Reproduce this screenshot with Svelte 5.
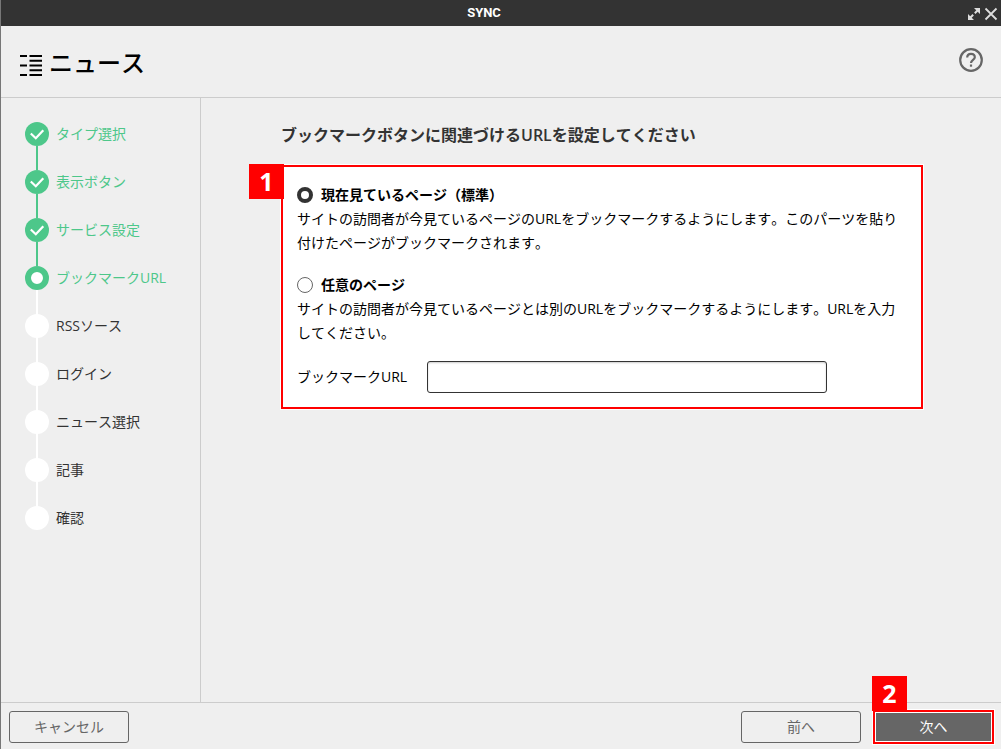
<script>
  const steps = [
    { label: 'タイプ選択', state: 'done' },
    { label: '表示ボタン', state: 'done' },
    { label: 'サービス設定', state: 'done' },
    { label: 'ブックマークURL', state: 'current' },
    { label: 'RSSソース', state: 'todo' },
    { label: 'ログイン', state: 'todo' },
    { label: 'ニュース選択', state: 'todo' },
    { label: '記事', state: 'todo' },
    { label: '確認', state: 'todo' }
  ];

  let target = $state('current');
  let url = $state('');
</script>

<div class="window">
  <div class="titlebar">
    <span class="app-name">SYNC</span>
    <div class="window-actions">
      <button aria-label="最大化">
        <svg width="14" height="14" viewBox="0 0 14 14" fill="none" stroke="currentColor" stroke-width="2">
          <path d="M7.8 6.2L11 3M6.2 7.8L3 11" />
          <path d="M7 1H13V7ZM1 7V13H7Z" fill="currentColor" stroke="none" />
        </svg>
      </button>
      <button aria-label="閉じる">
        <svg width="14" height="14" viewBox="0 0 14 14" fill="none" stroke="currentColor" stroke-width="1.8">
          <path d="M1.5 1.5L12.5 12.5M12.5 1.5L1.5 12.5" />
        </svg>
      </button>
    </div>
  </div>

  <header class="header">
    <svg class="list-icon" width="22" height="24" viewBox="0 0 22 24" fill="currentColor">
      <path d="M0 1h7v2H0zM0 10.5h7v2H0zM0 20h7v2H0z" />
      <path d="M9.5 1H22v2H9.5zM9.5 5.8H22v2H9.5zM9.5 10.5H22v2H9.5zM9.5 15.2H22v2H9.5zM9.5 20H22v2H9.5z" />
    </svg>
    <h1>ニュース</h1>
    <button class="help" aria-label="ヘルプ">
      <svg width="24" height="24" viewBox="0 0 24 24" fill="none" stroke="currentColor" stroke-width="2.2">
        <circle cx="12" cy="12" r="10.8" />
        <path d="M8.2 9.5C8.2 7.2 9.8 5.8 12 5.8S15.8 7.2 15.8 9.3C15.8 11.8 12 12 12 15" />
        <path d="M12 16.5V18.7" />
      </svg>
    </button>
  </header>

  <div class="body">
    <nav class="sidebar">
      <ol>
        {#each steps as step}
          <li class={step.state}>
            <span class="dot">
              {#if step.state === 'done'}
                <svg width="24" height="24" viewBox="0 0 24 24" fill="none" stroke="#fff" stroke-width="2.2">
                  <path d="M5.8 11.5L10.8 16.3L18.3 8.3" />
                </svg>
              {/if}
            </span>
            <span>{step.label}</span>
          </li>
        {/each}
      </ol>
    </nav>

    <main>
      <h2>ブックマークボタンに関連づける<span class="latin">URL</span>を設定してください</h2>

      <section class="panel">
        <span class="badge">1</span>
        <div class="option">
          <label>
            <input type="radio" name="target" value="current" bind:group={target} />
            現在見ているページ（標準）
          </label>
          <p>サイトの訪問者が今見ているページのURLをブックマークするようにします。このパーツを貼り付けたページがブックマークされます。</p>
        </div>
        <div class="option">
          <label>
            <input type="radio" name="target" value="other" bind:group={target} />
            任意のページ
          </label>
          <p>サイトの訪問者が今見ているページとは別のURLをブックマークするようにします。URLを入力してください。</p>
        </div>
        <div class="field">
          <label for="bookmark-url">ブックマークURL</label>
          <input id="bookmark-url" type="text" bind:value={url} />
        </div>
      </section>
    </main>
  </div>

  <footer>
    <button class="btn">キャンセル</button>
    <div class="next-group">
      <button class="btn">前へ</button>
      <div class="next">
        <span class="badge">2</span>
        <button class="btn primary">次へ</button>
      </div>
    </div>
  </footer>
</div>

<style>
  :global(body) {
    background: #efefef;
  }

  .window,
  .window * {
    box-sizing: border-box;
  }

  .window {
    display: flex;
    flex-direction: column;
    min-height: 100vh;
    border-left: 1px solid #777;
    background: #efefef;
    color: #000;
    font-family: 'Open Sans', 'Noto Sans CJK JP', sans-serif;
    font-size: 14px;
    font-kerning: none;
    line-height: 24px;
  }

  button,
  input {
    font: inherit;
    margin: 0;
  }

  button {
    cursor: pointer;
  }

  .titlebar {
    display: grid;
    grid-template-columns: 1fr auto 1fr;
    align-items: center;
    height: 26px;
    padding: 0 3px 0 33px;
    background: #333;
    color: #fff;
  }

  .app-name {
    grid-column: 2;
    margin-right: 64px;
    font-family: Roboto, sans-serif;
    font-size: 13px;
    font-weight: 700;
  }

  .window-actions {
    display: flex;
    justify-content: flex-end;
    gap: 3px;
    padding-top: 2px;
  }

  .window-actions button,
  .help {
    display: flex;
    padding: 0;
    border: 0;
    background: none;
    color: #ddd;
  }

  .header {
    display: flex;
    align-items: center;
    height: 72px;
    padding: 0 18px 0 19px;
    border-bottom: 1px solid #ccc;
  }

  .list-icon {
    margin-top: 8px;
  }

  h1 {
    margin: 2px 0 0 7px;
    font-size: 24px;
    font-weight: 500;
    line-height: 32px;
  }

  .header .help {
    margin: 0 0 4px auto;
    color: #666;
  }

  .body {
    display: flex;
    flex: 1;
  }

  .sidebar {
    flex: 0 0 200px;
    padding: 24px 0 24px 24px;
    border-right: 1px solid #ccc;
  }

  ol {
    display: flex;
    flex-direction: column;
    gap: 24px;
    margin: 0;
    padding: 0;
    list-style: none;
  }

  li {
    position: relative;
    display: flex;
    gap: 7px;
    color: #333;
  }

  .done,
  .current {
    color: #4dc78a;
  }

  .dot {
    width: 24px;
    height: 24px;
    border-radius: 50%;
    background: #fff;
  }

  .done .dot {
    background: #4dc78a;
  }

  .current .dot {
    border: 6px solid #4dc78a;
  }

  .dot svg {
    display: block;
  }

  /* connector down to the next step */
  li:not(:last-child)::after {
    content: '';
    position: absolute;
    top: 24px;
    left: 11px;
    width: 2px;
    height: 24px;
    background: #fff;
  }

  li.done::after {
    background: #4dc78a;
  }

  main {
    flex: 1;
    min-width: 0;
    padding: 25px 78px 24px 80px;
  }

  h2 {
    margin: 0 0 18px;
    color: #333;
    font-size: 16px;
    font-weight: 700;
    line-height: 24px;
  }

  .latin {
    font-weight: 600;
  }

  .panel {
    position: relative;
    padding: 16px 22px 14px 14px;
    border: 2px solid #f00;
    background: #fff;
    box-shadow: 0 0 0 1px #fff;
  }

  .badge {
    position: absolute;
    width: 35px;
    height: 35px;
    background: #f00;
    color: #fff;
    font-family: 'Noto Sans', sans-serif;
    font-size: 25px;
    font-weight: 700;
    line-height: 34px;
    text-align: center;
  }

  .panel .badge {
    top: -3px;
    left: -34px;
  }

  .option {
    margin-bottom: 18px;
  }

  .option:last-of-type {
    margin-bottom: 16px;
  }

  .option label {
    display: flex;
    align-items: center;
    gap: 8px;
    width: fit-content;
    font-weight: 700;
  }

  .option p {
    margin: 0;
  }

  input[type='radio'] {
    appearance: none;
    width: 16px;
    height: 16px;
    border: 1px solid #666;
    border-radius: 50%;
    background: #fff;
  }

  input[type='radio']:checked {
    border: 4px solid #333;
  }

  .field {
    display: flex;
    align-items: center;
    gap: 20px;
  }

  .option + .field {
    margin-top: -2px;
  }

  .field input {
    width: 400px;
    height: 32px;
    padding: 0 8px;
    border: 1px solid #333;
    border-radius: 3px;
    background: #fff;
    box-shadow: inset 0 1px 2px #ccc;
  }

  footer {
    display: flex;
    align-items: center;
    justify-content: space-between;
    height: 47px;
    padding: 2px 7px 0 8px;
    border-top: 1px solid #ccc;
  }

  .next-group {
    display: flex;
    align-items: center;
    gap: 12px;
  }

  .btn {
    display: block;
    width: 120px;
    height: 32px;
    padding: 0;
    border: 1px solid #666;
    border-radius: 3px;
    background: transparent;
    color: #666;
  }

  .next {
    position: relative;
  }

  .next .badge {
    top: -34px;
    left: -1px;
  }

  .btn.primary {
    width: 121px;
    height: 34px;
    border: 2px solid #f00;
    border-radius: 0;
    background: #666;
    color: #fff;
    box-shadow: 0 0 0 1px #fff, inset 0 0 0 1px #fff;
  }
</style>
